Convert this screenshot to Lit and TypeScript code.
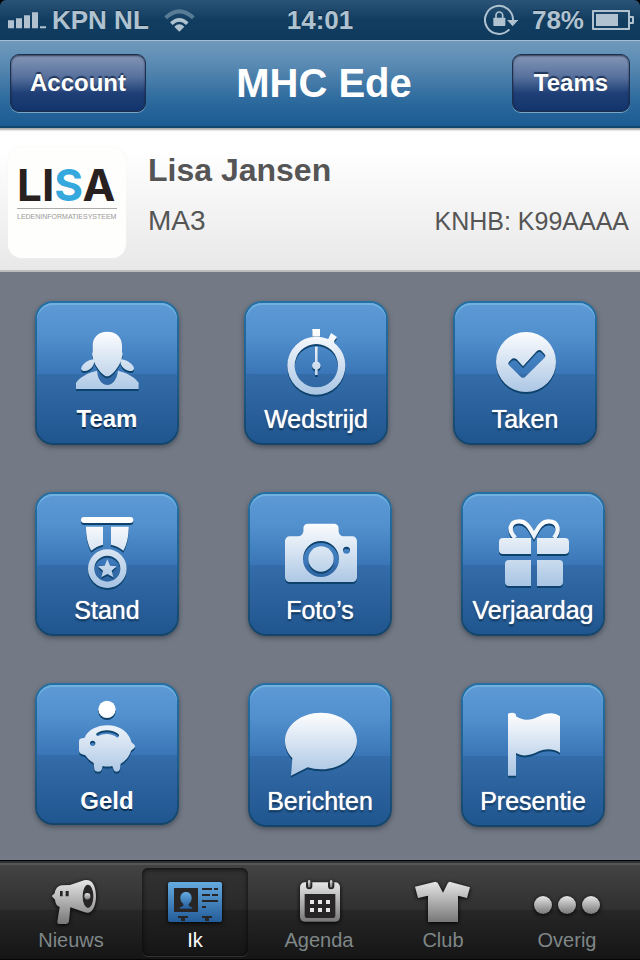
import { LitElement, html, css, svg, TemplateResult } from "lit";
import { customElement, property, state } from "lit/decorators.js";
import { classMap } from "lit/directives/class-map.js";

type Art = { x: number; y: number; shapes: TemplateResult };

/* Tile artwork, drawn at three units per pixel. x and y give the origin of the drawing. */
const tileArt: Record<string, Art> = {
  team: {
    x: 51, y: 39,
    shapes: svg`
      <path d="M262 125C290 125 306 143 306 166V186Q310 192 306 200C302 226 276 259 262 259C248 259 222 226 218 200Q214 192 218 186V166C218 143 234 125 262 125Z"/>
      <path d="M222 208C226 224 214 241 196 243C186 244 181 238 185 231C190 220 206 209 222 208Z"/>
      <path d="M302 208C298 224 310 241 330 243C340 244 344 238 341 231C336 220 318 209 302 208Z"/>
      <path d="M168 297V278C178 263 203 248 231 242C233 268 246 285 262 285C278 285 291 268 294 242C321 248 346 263 356 278V297Z"/>`,
  },
  match: {
    x: 51, y: 39,
    shapes: svg`
      <path d="M250 117H273V140H250Z"/>
      <path d="M306 129L324 141L315 154L317 158L306 165L291 156L299 145Z"/>
      <path fill-rule="evenodd" d="M175 227A87 87 0 1 0 349 227A87 87 0 1 0 175 227ZM197 227A65 65 0 1 1 327 227A65 65 0 1 1 197 227Z"/>
      <path d="M258 170H266V215A12 12 0 0 1 266 238V255H258V238A12 12 0 0 1 258 215Z"/>`,
  },
  tasks: {
    x: 675, y: 39,
    shapes: svg`
      <path fill-rule="evenodd" d="M798 216A90 90 0 1 0 978 216A90 90 0 1 0 798 216ZM836 217L846 206Q853 202 860 208L879 229L920 184Q928 177 935 183L944 193Q948 198 943 204L886 260Q879 267 872 260L837 226Q834 222 836 217Z"/>`,
  },
  ranking: {
    x: 51, y: 39,
    shapes: svg`
      <rect x="183" y="108" width="157" height="18" rx="9"/>
      <path d="M198 137H249V191C236 194 224 200 214 209C203 190 198 165 198 137Z"/>
      <path d="M326 137H273V191C287 194 300 200 310 209C321 190 326 165 326 137Z"/>
      <path fill-rule="evenodd" d="M204 263A58 58 0 1 0 320 263A58 58 0 1 0 204 263ZM223 263A39 39 0 1 1 301 263A39 39 0 1 1 223 263Z"/>
      <path d="M262 235L270 254L290 256L275 269L280 289L262 279L244 289L249 269L234 256L254 254Z"/>`,
  },
  photos: {
    x: 63, y: 39,
    shapes: svg`
      <path fill-rule="evenodd" d="M182 166H205C216 166 223 160 223 148V142C223 134 229 128 237 128H315C323 128 329 134 329 142V148C329 160 335 166 346 166H370A14 14 0 0 1 384 180V289A14 14 0 0 1 370 303H182A14 14 0 0 1 168 289V180A14 14 0 0 1 182 166ZM222 234A54 54 0 1 0 330 234A54 54 0 1 0 222 234ZM342 208A10 10 0 1 0 363 208A10 10 0 1 0 342 208Z"/>
      <circle cx="276" cy="234" r="38"/>`,
  },
  birthday: {
    x: 699, y: 39,
    shapes: svg`
      <path fill="none" stroke="url(#shine)" stroke-width="13" d="M856 171C834 150 838 121 868 121C890 121 900 142 912 163C924 142 934 121 956 121C986 121 990 150 972 171"/>
      <path d="M903 171V219H819A12 12 0 0 1 807 207V183A12 12 0 0 1 819 171Z"/>
      <path d="M921 171V219H1005A12 12 0 0 0 1017 207V183A12 12 0 0 0 1005 171Z"/>
      <path d="M903 237V315H837A12 12 0 0 1 825 303V249A12 12 0 0 1 837 237Z"/>
      <path d="M921 237V315H987A12 12 0 0 0 999 303V249A12 12 0 0 0 987 237Z"/>`,
  },
  money: {
    x: 51, y: 45,
    shapes: svg`
      <circle cx="261" cy="118" r="26"/>
      <path fill-rule="evenodd" d="M177 215Q177 205 187 205L194 203C203 180 232 166 262 166C300 166 328 188 334 216L343 224Q347 229 343 234L333 242C327 262 314 274 302 281L300 297Q298 305 290 305Q283 305 281 299L277 288Q262 291 248 288L245 299Q243 305 235 305Q224 305 223 297L221 279C208 272 202 264 196 256L186 253Q177 250 177 243ZM210 220A8 8 0 1 0 226 220A8 8 0 1 0 210 220ZM230 190C247 177 278 177 296 193Q299 200 292 203C276 190 252 188 234 199Q226 196 230 190Z"/>`,
  },
  messages: {
    x: 63, y: 45,
    shapes: svg`
      <path d="M276 128C336 128 384 166 384 213C384 260 336 298 276 298Q254 298 236 292L186 317L190 264C176 250 168 232 168 213C168 166 216 128 276 128Z"/>`,
  },
  attendance: {
    x: 699, y: 45,
    shapes: svg`
      <path d="M834 133Q834 128 846 128Q858 128 858 136V139C884 156 906 149 932 137C954 127 975 127 990 139V248C968 235 946 236 926 244C902 256 880 262 858 249V317H834Z"/>`,
  },
};

/* Tab bar artwork, at the same scale. */
const tabArt: Record<string, Art> = {
  news: {
    x: 105, y: 54,
    shapes: svg`
      <path d="M155 138L164 130C166 116 174 107 186 106L210 105L252 91Q258 89 266 91C280 94 288 115 288 139C288 165 278 188 265 188Q260 189 254 187L211 172L207 214Q206 221 199 222H177Q171 222 172 215L179 171C170 168 166 160 165 149Z"/>
      <ellipse class="hole" cx="264" cy="139" rx="16" ry="35"/>
      <path class="hole" d="M180 123H188V139H180ZM197 123H206V139H197Z"/>
      <ellipse cx="262" cy="139" rx="9" ry="10"/>`,
  },
  me: {
    x: 477, y: 54,
    shapes: svg`
      <rect x="504" y="96" width="162" height="120" rx="6"/>
      <rect class="hole" x="522" y="114" width="72" height="72"/>
      <path d="M558 126C569 126 575 134 575 145C574 155 570 159 566 162V167L577 173V176H539V173L550 167V162C546 159 542 155 541 145C541 134 547 126 558 126Z"/>
      <path class="hole" d="M606 114H636V120H606ZM642 114H654V120H642ZM606 132H630V138H606ZM636 132H654V138H636ZM606 150H654V156H606ZM606 168H618V174H606Z"/>
      <path class="hole" d="M534 198H564V204H555V213H543V204H534ZM606 198H636V204H627V213H615V204H606Z"/>`,
  },
  agenda: {
    x: 849, y: 54,
    shapes: svg`
      <rect x="900" y="97" width="120" height="118" rx="14"/>
      <path class="hole" d="M918 97H937V108Q937 118 928 118Q918 118 918 108ZM984 97H1003V108Q1003 118 993 118Q984 118 984 108Z"/>
      <path d="M924 92Q928 88 931 92V112H924ZM990 92Q994 88 997 92V112H990Z"/>
      <path class="hole" d="M914 132H1006V197Q1006 204 999 204H921Q914 204 914 197Z"/>
      <path fill="#e8e8e8" d="M930 150H942V162H930ZM954 150H966V162H954ZM978 150H990V162H978ZM930 174H942V186H930ZM954 174H966V186H954ZM978 174H990V186H978Z"/>`,
  },
  club: {
    x: 261, y: 54,
    shapes: svg`<path d="M285 110L346 95L353 98L369 128L384 98L389 95L450 112L441 144L414 137V216H324V137L294 144Z"/>`,
  },
  more: {
    x: 633, y: 54,
    shapes: svg`<circle cx="669" cy="165" r="27"/><circle cx="741" cy="165" r="27"/><circle cx="813" cy="165" r="27"/>`,
  },
};

@customElement("menu-tile")
export class MenuTile extends LitElement {
  @property() label = "";
  @property() icon = "";
  @property({ type: Boolean }) strong = false;
  @property({ type: Boolean }) short = false;

  static styles = css`
    :host { display: block; }
    .tile {
      box-sizing: border-box;
      display: flex;
      flex-direction: column;
      align-items: center;
      width: 144px;
      height: 144px;
      padding: 0;
      border: 2px solid transparent;
      border-radius: 18px;
      background:
        linear-gradient(#5d9ad6, #5290ce 22%, #3a76b7 51%, #346ca9 51%, #20568f) padding-box,
        linear-gradient(#2470a4, #1f6090 50%, #144469) border-box;
      box-shadow: inset 0 2px 0 #70b1df, 0 2px 5px rgba(30, 35, 45, 0.5);
      color: #fff;
      font: 25px/30px "Liberation Sans", Arial, sans-serif;
      cursor: pointer;
    }
    .short { height: 142px; }
    .icon {
      flex: none;
      display: block;
      filter: drop-shadow(0 2px 0 #0d426c);
    }
    .label {
      white-space: nowrap;
      text-shadow: 0 0 1px #fff, 0 2px 2px #0b2f50;
    }
    .strong {
      font-size: 24px;
      font-weight: bold;
      text-shadow: 0 2px 0 #0b2f50;
    }
  `;

  render() {
    const art = tileArt[this.icon];
    return html`
      <button class=${classMap({ tile: true, short: this.short })}>
        <svg class="icon" width="140" height="101" viewBox="${art.x} ${art.y} 420 303" fill="url(#shine)" aria-hidden="true">
          <defs>
            <linearGradient id="shine" gradientUnits="userSpaceOnUse" x1="0" x2="0" y1=${art.y + 80} y2=${art.y + 270}>
              <stop offset="0" stop-color="#fff" />
              <stop offset="1" stop-color="#abc6e4" />
            </linearGradient>
          </defs>
          ${art.shapes}
        </svg>
        <span class=${classMap({ label: true, strong: this.strong })}>${this.label}</span>
      </button>
    `;
  }
}

@customElement("tab-item")
export class TabItem extends LitElement {
  @property() label = "";
  @property() icon = "";
  @property({ type: Boolean }) selected = false;

  static styles = css`
    :host { display: block; flex: 1; min-width: 0; }
    .tab {
      box-sizing: border-box;
      display: flex;
      flex-direction: column;
      align-items: center;
      width: 100%;
      height: 88px;
      padding: 0;
      border: 0;
      border-radius: 6px;
      background: none;
      color: #7f8788;
      font: 20px/24px "Liberation Sans", Arial, sans-serif;
      cursor: pointer;
    }
    .selected {
      background: linear-gradient(rgba(0, 0, 0, 0.25), rgba(0, 0, 0, 0.05));
      box-shadow: inset 0 1px 5px rgba(0, 0, 0, 0.8), 0 1px 0 rgba(255, 255, 255, 0.12);
      color: #fff;
    }
    .icon {
      flex: none;
      display: block;
      margin-bottom: 3px;
      filter: drop-shadow(0 1px 2px #000);
    }
    .hole { fill: #272525; }
  `;

  render() {
    const art = tabArt[this.icon];
    const [from, to] = this.selected ? ["#65abdf", "#235c9a"] : ["#e6e6e6", "#777"];
    return html`
      <button class=${classMap({ tab: true, selected: this.selected })} aria-pressed=${this.selected ? "true" : "false"}>
        <svg class="icon" width="72" height="57" viewBox="${art.x} ${art.y} 216 171" fill="url(#metal)" aria-hidden="true">
          <defs>
            <linearGradient id="metal" x1="0" x2="0" y1="0" y2="1">
              <stop offset="0" stop-color=${from} />
              <stop offset="1" stop-color=${to} />
            </linearGradient>
          </defs>
          ${art.shapes}
        </svg>
        <span>${this.label}</span>
      </button>
    `;
  }
}

@customElement("app-root")
export class AppRoot extends LitElement {
  @state() private tab = "me";

  static styles = css`
    :host {
      display: flex;
      flex-direction: column;
      min-height: 100vh;
      background: #737a86;
      font-family: "Liberation Sans", Arial, sans-serif;
    }
    .screen-top { background: #000; }
    .status {
      display: grid;
      grid-template-columns: 1fr auto 1fr;
      align-items: center;
      height: 40px;
      padding: 0 6px;
      border-radius: 6px 6px 0 0;
      background: linear-gradient(#2a5377, #113d61 50%, #0f3a5c);
      color: #b0c2d0;
      fill: #b0c2d0;
      font-size: 26px;
      font-weight: bold;
      line-height: 40px;
      text-shadow: 0 -1px 0 #0a2940;
    }
    .cell { display: flex; align-items: center; }
    .end { justify-content: flex-end; }
    .bars { margin: 0 5px 0 2px; }
    .wifi { margin-left: 15px; }
    .lock { margin-right: 14px; }
    .battery { margin-left: 8px; }
    .nav {
      box-sizing: border-box;
      display: grid;
      grid-template-columns: 1fr auto 1fr;
      align-items: center;
      height: 88px;
      padding: 0 10px 2px;
      border-top: 1px solid #a4bfd3;
      border-bottom: 2px solid #12466f;
      background: linear-gradient(#7099bb, #5c8cb4 25%, #2d6a9d 70%, #1a5b92);
    }
    .title {
      margin: 0;
      padding-left: 8px;
      color: #fff;
      font-size: 40px;
      line-height: 44px;
    }
    .action {
      justify-self: start;
      box-sizing: border-box;
      min-width: 118px;
      height: 58px;
      padding: 0 19px;
      border: 1px solid #1d2f4c;
      border-radius: 9px;
      background: linear-gradient(#8496b6, #56709c 40%, #1f3f76 68%, #12346c);
      box-shadow: inset 0 1px 2px rgba(10, 20, 40, 0.7), 0 1px 0 #7ba5c6;
      color: #fff;
      font: bold 24px/28px "Liberation Sans", Arial, sans-serif;
      text-shadow: 0 -2px 1px #20355a;
      cursor: pointer;
    }
    .right { justify-self: end; }
    .profile {
      box-sizing: border-box;
      display: flex;
      height: 144px;
      padding: 19px 11px 0 8px;
      border-bottom: 2px solid #bcbdbe;
      background: linear-gradient(#fff 15%, #e8e8e8);
      box-shadow: inset 0 4px 2px -2px #a9a9a9;
      color: #555;
    }
    .logo {
      box-sizing: border-box;
      flex: none;
      width: 118px;
      height: 111px;
      margin-right: 22px;
      padding: 16px 9px 0;
      border-radius: 14px;
      background: #fefefd;
      box-shadow: 0 0 2px #f2f2f0;
      white-space: nowrap;
    }
    .brand {
      display: block;
      border-bottom: 1px solid #aaa;
      color: #29211f;
      font: bold 44px/45px Inter, "Liberation Sans", sans-serif;
    }
    .accent { color: #35a8de; }
    .tagline {
      display: block;
      color: #999;
      font: 7px/16px "Liberation Sans", Arial, sans-serif;
    }
    .details { flex: 1; padding-top: 4px; }
    .name {
      margin: 0 0 16px;
      font-size: 32px;
      line-height: 38px;
    }
    .line {
      display: flex;
      justify-content: space-between;
      align-items: baseline;
      font-size: 28px;
      line-height: 32px;
    }
    .number { font-size: 25px; }
    .menu {
      flex: 1;
      display: flex;
      flex-direction: column;
      gap: 47px;
      padding: 29px 0 33px;
    }
    .row {
      display: flex;
      justify-content: space-between;
      padding: 0 35px;
    }
    .first { padding-right: 43px; }
    .tabs {
      box-sizing: border-box;
      display: flex;
      gap: 18px;
      height: 100px;
      padding: 7px 20px 0 18px;
      border: 1px solid #050505;
      border-width: 1px 0;
      background: linear-gradient(#454545, #303030 50%, #272727 50%, #151515);
      box-shadow: inset 0 2px 0 #2d3133, inset 0 4px 0 #555657;
    }
  `;

  render() {
    const tabs = [
      ["news", "Nieuws"],
      ["me", "Ik"],
      ["agenda", "Agenda"],
      ["club", "Club"],
      ["more", "Overig"],
    ];
    return html`
      <div class="screen-top">
        <div class="status">
          <div class="cell">
            <svg class="bars" width="39" height="17" viewBox="24 38 117 51" aria-hidden="true">
              <path d="M24 63H42V87H24ZM48 57H66V87H48ZM72 48H90V87H72ZM96 39H114V87H96ZM120 81H138V87H120Z" />
            </svg>
            <span>KPN NL</span>
            <svg class="wifi" width="31" height="24" viewBox="494 22 93 72" aria-hidden="true">
              <path d="M540 93L525 78Q540 64 555 78Z" />
              <path d="M516 69Q540 46 564 69" fill="none" stroke="#b0c2d0" stroke-width="11" />
              <path d="M499 51Q540 13 582 51" fill="none" stroke="#587b96" stroke-width="12" />
            </svg>
          </div>
          <span>14:01</span>
          <div class="cell end">
            <svg class="lock" width="34" height="32" viewBox="488 9 102 96" aria-hidden="true">
              <path d="M575 57A42 42 0 1 0 564 85" fill="none" stroke="#b0c2d0" stroke-width="6" />
              <path d="M557 57H591L574 76Z" />
              <rect x="516" y="50" width="36" height="25" rx="2" />
              <path d="M524 51V43A10 10 0 0 1 544 43V51" fill="none" stroke="#b0c2d0" stroke-width="5" />
            </svg>
            <span>78%</span>
            <svg class="battery" width="42" height="20" viewBox="816 27 126 60" aria-hidden="true">
              <path fill-rule="evenodd" d="M819 27H927Q930 27 930 30V45H939Q942 45 942 48V66Q942 69 939 69H930V84Q930 87 927 87H819Q816 87 816 84V30Q816 27 819 27ZM822 33V81H924V33ZM930 51V63H936V51Z" />
              <rect x="828" y="39" width="66" height="36" />
            </svg>
          </div>
        </div>
      </div>
      <header class="nav">
        <button class="action">Account</button>
        <h1 class="title">MHC Ede</h1>
        <button class="action right">Teams</button>
      </header>
      <section class="profile">
        <div class="logo">
          <span class="brand">LI<span class="accent">S</span>A</span>
          <span class="tagline">LEDENINFORMATIESYSTEEM</span>
        </div>
        <div class="details">
          <h2 class="name">Lisa Jansen</h2>
          <div class="line"><span>MA3</span><span class="number">KNHB: K99AAAA</span></div>
        </div>
      </section>
      <main class="menu">
        <div class="row first">
          <menu-tile icon="team" label="Team" strong></menu-tile>
          <menu-tile icon="match" label="Wedstrijd"></menu-tile>
          <menu-tile icon="tasks" label="Taken"></menu-tile>
        </div>
        <div class="row">
          <menu-tile icon="ranking" label="Stand"></menu-tile>
          <menu-tile icon="photos" label="Foto’s"></menu-tile>
          <menu-tile icon="birthday" label="Verjaardag"></menu-tile>
        </div>
        <div class="row">
          <menu-tile icon="money" label="Geld" strong short></menu-tile>
          <menu-tile icon="messages" label="Berichten"></menu-tile>
          <menu-tile icon="attendance" label="Presentie"></menu-tile>
        </div>
      </main>
      <nav class="tabs">
        ${tabs.map(
          ([id, label]) => html`<tab-item
            icon=${id}
            label=${label}
            ?selected=${this.tab === id}
            @click=${() => (this.tab = id)}
          ></tab-item>`
        )}
      </nav>
    `;
  }
}
